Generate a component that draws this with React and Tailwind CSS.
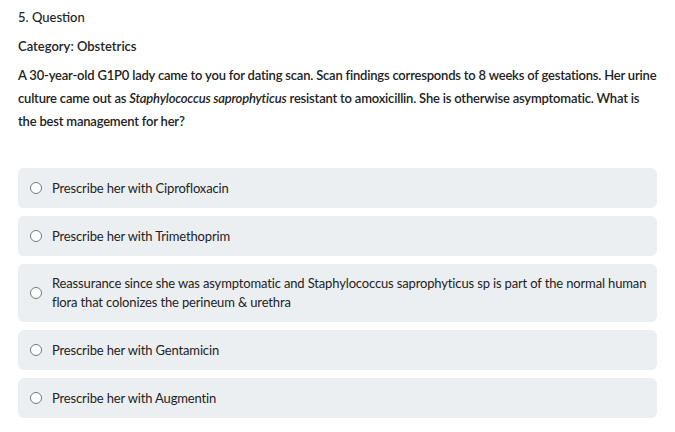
import React, { useState } from 'react';

const options = [
  'Prescribe her with Ciprofloxacin',
  'Prescribe her with Trimethoprim',
  'Reassurance since she was asymptomatic and Staphylococcus saprophyticus sp is part of the normal human flora that colonizes the perineum & urethra',
  'Prescribe her with Gentamicin',
  'Prescribe her with Augmentin',
];

export default function App() {
  const [picked, setPicked] = useState(null);

  return (
    <div className="w-[675px] h-[432px] bg-white px-[18px] pt-[6px] text-[13px] text-[#222] font-['Lato','Liberation_Sans',sans-serif]">
      <div className="leading-[23px] font-medium">5. Question</div>
      <div className="mt-[6px] leading-[23px] font-semibold">Category: Obstetrics</div>
      <div className="mt-[6px] leading-[23px] font-semibold tracking-[-0.2px]">
        A 30-year-old G1P0 lady came to you for dating scan. Scan findings corresponds to 8 weeks of gestations. Her urine
        culture came out as <i>Staphylococcus saprophyticus</i> resistant to amoxicillin. She is otherwise asymptomatic. What is
        the best management for her?
      </div>

      <div className="mt-[35px] flex flex-col gap-[8px]">
        {options.map((opt, i) => (
          <label
            key={i}
            className="flex items-center gap-[10px] min-h-[40px] rounded-[6px] bg-[#eceff2] pl-[12px] pr-[8px] py-[10px] cursor-pointer"
          >
            <input
              type="radio"
              name="answer"
              checked={picked === i}
              onChange={() => setPicked(i)}
              className="m-0 w-[12px] h-[12px] shrink-0 accent-[#555]"
            />
            <span className="leading-[19px] tracking-[-0.15px]">{opt}</span>
          </label>
        ))}
      </div>
    </div>
  );
}
